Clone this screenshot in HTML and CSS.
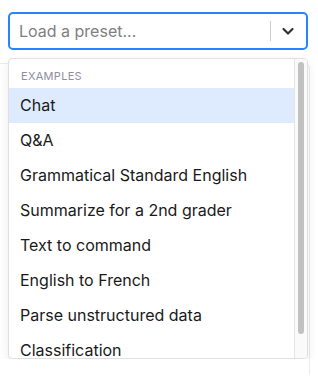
FILE: index.html
```html
<!doctype html>
<html>
	<head>
	<meta charset="utf-8">
	<link rel="stylesheet" href="styles.css">
	</head>
	<body>
	<div class="backdrop"></div>
	<div class="picker">
		<div class="control">
			<div class="placeholder">Load a preset...</div>
			<div class="indicators">
				<span class="sep"></span>
				<span class="arrow">
					<svg width="20" height="20" viewBox="0 0 20 20"><path d="M5.5 8l4.5 4.5 4.5-4.5" fill="none" stroke="#333" stroke-width="2.2" stroke-linecap="round" stroke-linejoin="round"/></svg>
				</span>
			</div>
		</div>
		<div class="menu">
			<div class="list">
				<div class="heading">Examples</div>
				<div class="option active">Chat</div>
				<div class="option">Q&amp;A</div>
				<div class="option">Grammatical Standard English</div>
				<div class="option">Summarize for a 2nd grader</div>
				<div class="option">Text to command</div>
				<div class="option">English to French</div>
				<div class="option">Parse unstructured data</div>
				<div class="option">Classification</div>
			</div>
			<div class="track"><div class="thumb"></div></div>
		</div>
	</div>
	</body>
</html>
```
FILE: styles.css
```css
html,body{
	overflow:hidden;
}
body{
	margin:0;
	padding:12px 10px 0 8px;
	background:#fff;
	font-family:Inter,"Noto Sans",sans-serif;
	color:#1a1a1a;
}
.backdrop{
	position:absolute;
	left:-10px;
	top:63px;
	width:318px;
	height:311px;
	border:1px solid #ececec;
	border-bottom:none;
	border-radius:6px 6px 0 0;
}
.picker{
	position:relative;
	width:300px;
}
.control{
	display:flex;
	align-items:center;
	height:38px;
	box-sizing:border-box;
	border:2px solid #2684ff;
	border-radius:5px;
	background:#fff;
}
.placeholder{
	flex:1;
	padding-left:9px;
	font-size:16px;
	color:#808080;
}
.indicators{
	display:flex;
	align-items:center;
	height:100%;
}
.sep{
	width:1px;
	height:20px;
	background:#ccc;
}
.arrow{
	display:flex;
	padding:0 8px 0 7px;
}
.menu{
	display:flex;
	height:299px;
	margin-top:8px;
	border:1px solid #e0e0e0;
	border-radius:4px;
	box-shadow:0 4px 11px rgba(0,0,0,.08);
	background:#fff;
	overflow:hidden;
}
.list{
	flex:1;
	overflow:hidden;
	padding-top:4px;
}
.track{
	width:13px;
	padding:3px 3px 0 3px;
	box-sizing:border-box;
	background:#fafafa;
	border-left:1px solid #e6e6e6;
}
.thumb{
	height:272px;
	border-radius:4px;
	background:#c1c1c1;
}
.heading{
	padding:6px 12px 5px;
	font-size:11px;
	line-height:14px;
	color:#8e8ea0;
	text-transform:uppercase;
	letter-spacing:.3px;
}
.option{
	padding:8px 11px;
	font-size:16px;
	line-height:19px;
	white-space:nowrap;
}
.active{
	background:#deebff;
}
```
